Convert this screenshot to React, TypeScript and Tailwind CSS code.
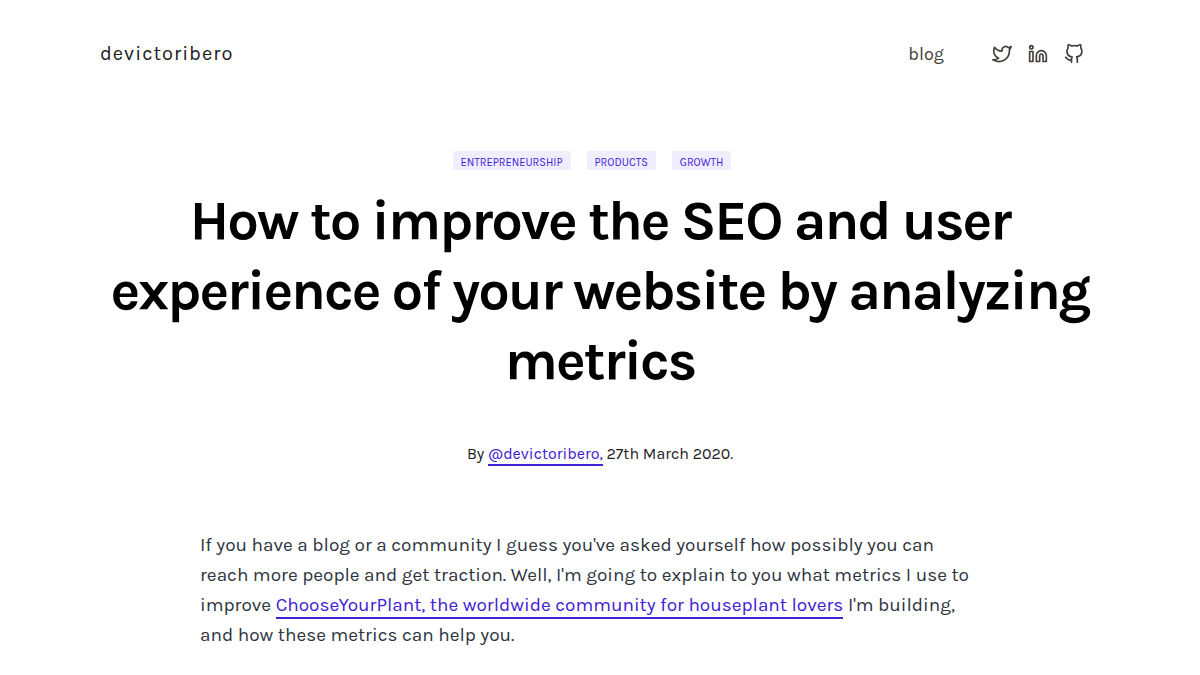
import React from 'react';

const iconProps = {
  viewBox: '0 0 24 24',
  className: 'size-5 overflow-visible',
  fill: 'none',
  stroke: 'currentColor',
  strokeWidth: 2,
  strokeLinecap: 'round',
  strokeLinejoin: 'round',
  'aria-hidden': true,
} as const;

const TwitterIcon = () => (
  <svg {...iconProps}>
    <path d="M23 3a10.9 10.9 0 0 1-3.14 1.53 4.48 4.48 0 0 0-7.86 3v1A10.66 10.66 0 0 1 3 4s-4 9 5 13a11.64 11.64 0 0 1-7 2c9 5 20 0 20-11.5a4.5 4.5 0 0 0-.08-.83A7.72 7.72 0 0 0 23 3z" />
  </svg>
);

const LinkedinIcon = () => (
  <svg {...iconProps}>
    <path d="M16 8a6 6 0 0 1 6 6v7h-4v-7a2 2 0 0 0-2-2 2 2 0 0 0-2 2v7h-4v-7a6 6 0 0 1 6-6z" />
    <rect x="2" y="9" width="4" height="12" />
    <circle cx="4" cy="4" r="2" />
  </svg>
);

const GithubIcon = () => (
  <svg {...iconProps}>
    <path d="M9 19c-5 1.5-5-2.5-7-3m14 6v-3.87a3.37 3.37 0 0 0-.94-2.61c3.14-.35 6.44-1.54 6.44-7A5.44 5.44 0 0 0 20 4.77 5.07 5.07 0 0 0 19.91 1S18.73.65 16 2.48a13.38 13.38 0 0 0-7 0C6.27.65 5.09 1 5.09 1A5.07 5.07 0 0 0 5 4.77a5.44 5.44 0 0 0-1.5 3.78c0 5.42 3.3 6.61 6.44 7A3.37 3.37 0 0 0 9 18.13V22" />
  </svg>
);

const socials = [
  { name: 'Twitter', href: '#twitter', Icon: TwitterIcon },
  { name: 'LinkedIn', href: '#linkedin', Icon: LinkedinIcon },
  { name: 'GitHub', href: '#github', Icon: GithubIcon },
];

const tags = ['Entrepreneurship', 'Products', 'Growth'];

export default function App() {
  return (
    <div className="mx-auto max-w-[1000px] bg-white pt-10 pb-5 font-['Karla','Liberation_Sans',sans-serif] text-[#22211c]">
      <header className="flex items-center justify-between">
        <a href="#home" className="text-xl tracking-wider">devictoribero</a>
        <nav className="flex items-center gap-12 pr-4 text-[#433e38]">
          <a href="#blog" className="text-lg">blog</a>
          <ul className="flex items-center gap-4">
            {socials.map(({ name, href, Icon }) => (
              <li key={name}>
                <a href={href} aria-label={name} className="block"><Icon /></a>
              </li>
            ))}
          </ul>
        </nav>
      </header>

      <main>
        <ul className="mt-[83px] flex justify-center gap-4 pr-4">
          {tags.map((tag) => (
            <li key={tag} className="rounded-xs bg-[#f0edff] px-2 pt-1 text-[11px] leading-[15px] text-[#3f20d4] uppercase">
              {tag}
            </li>
          ))}
        </ul>
        <h1 className="mt-4 text-center text-[56px] leading-[70px] font-bold tracking-[-2px] text-black">
          How to improve the SEO and user experience of your website by analyzing metrics
        </h1>
        <p className="mt-[46px] text-center text-base leading-6">
          By{' '}
          <a href="#author" className="border-b-2 border-[#3f20d4] pb-px text-[#3f20d4]">@devictoribero,</a>{' '}
          27th March 2020.
        </p>
        <p className="mx-auto mt-16 max-w-[800px] pr-5 text-[19px] leading-[30px] text-[#2d3440]">
          If you have a blog or a community I guess you've asked yourself how possibly you can reach more people and
          get traction. Well, I'm going to explain to you what metrics I use to improve{' '}
          <a href="#chooseyourplant" className="border-b-2 border-[#3f20d4] pb-px text-[#3f20d4]">
            ChooseYourPlant, the worldwide community for houseplant lovers
          </a>{' '}
          I'm building, and how these metrics can help you.
        </p>
      </main>
    </div>
  );
}
